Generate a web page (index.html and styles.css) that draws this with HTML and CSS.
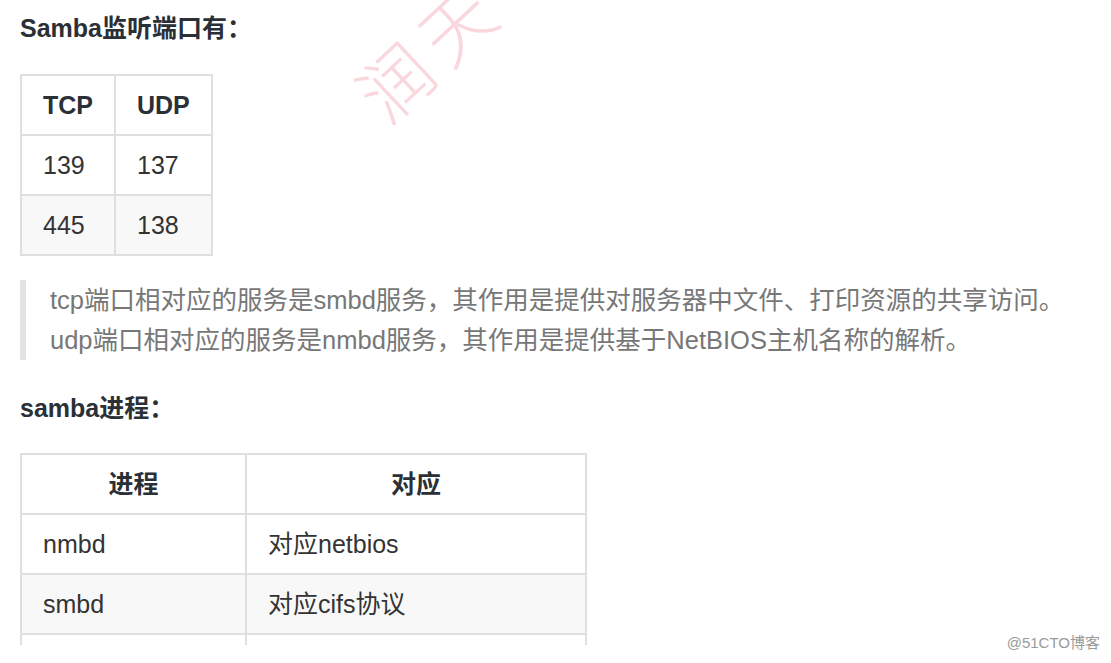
FILE: index.html
```html
<!DOCTYPE html>
<html lang="zh-CN">
<head>
    <meta charset="UTF-8">
    <meta name="viewport" content="width=device-width, initial-scale=1.0">
    <title>Samba 端口与进程</title>
    <link rel="stylesheet" href="styles.css">
</head>
<body>
    <div class="page">
        <h4 class="section-title">Samba监听端口有：</h4>

        <table class="md-table">
            <thead>
                <tr><th>TCP</th><th>UDP</th></tr>
            </thead>
            <tbody>
                <tr><td>139</td><td>137</td></tr>
                <tr><td>445</td><td>138</td></tr>
            </tbody>
        </table>

        <blockquote class="note">
            tcp端口相对应的服务是smbd服务，其作用是提供对服务器中文件、打印资源的共享访问。<br>
            udp端口相对应的服务是nmbd服务，其作用是提供基于NetBIOS主机名称的解析。
        </blockquote>

        <h4 class="section-title second">samba进程：</h4>

        <div class="table-crop">
            <table class="md-table wide">
                <thead>
                    <tr><th class="col-proc">进程</th><th class="col-desc">对应</th></tr>
                </thead>
                <tbody>
                    <tr><td>nmbd</td><td>对应netbios</td></tr>
                    <tr><td>smbd</td><td>对应cifs协议</td></tr>
                    <tr><td></td><td></td></tr>
                </tbody>
            </table>
        </div>

        <!-- watermarks sit over the content -->
        <div class="stamp">润天</div>
        <div class="credit">@51CTO博客</div>
    </div>
</body>
</html>
```

FILE: styles.css
```css
:root {
    --text-color: #333;
    --quote-color: #777;
    --border-color: #dfdfdf;
    --stripe-color: #f8f8f8;
}

body {
    margin: 0;
    background: #fff;
    font-family: "Liberation Sans", "Noto Sans CJK SC", sans-serif;
    color: var(--text-color);
}

.page {
    position: relative;
    height: 663px;
    overflow: hidden;
    padding: 8px 0 0 20px;
    box-sizing: border-box;
}

.section-title {
    margin: 0;
    font-size: 25px;
    line-height: 40px;
    font-weight: bold;
    color: #2b2f36;
}

.section-title.second {
    margin-top: 28px;
}

.md-table {
    border-collapse: collapse;
    margin-top: 26px;
    font-size: 25px;
    line-height: 40px;
}

.md-table th,
.md-table td {
    border: 2px solid var(--border-color);
    padding: 9px 21px;
    text-align: left;
}

.md-table th {
    font-weight: bold;
    color: #2b2f36;
}

.md-table tbody tr:nth-child(even) {
    background: var(--stripe-color);
}

.note {
    margin: 24px 0 0;
    padding: 0 0 0 24px;
    border-left: 6px solid #e2e2e2;
    font-size: 25.5px;
    line-height: 40px;
    color: var(--quote-color);
}

.table-crop {
    margin-top: 25px;
    height: 192px;
    overflow: hidden;
}

.md-table.wide {
    margin-top: 0;
    width: 567px;
    table-layout: fixed;
}

.md-table.wide th {
    text-align: center;
}

.md-table.wide td {
    height: 40px;
}

.col-proc {
    width: 181px;
}

.stamp {
    position: absolute;
    left: 357px;
    top: 44px;
    font-family: "Noto Sans CJK SC", sans-serif;
    font-size: 72px;
    line-height: 72px;
    font-weight: 300;
    letter-spacing: 12px;
    color: rgba(238, 110, 130, 0.28);
    transform: rotate(-43deg);
    transform-origin: 36px 36px;
    pointer-events: none;
}

.credit {
    position: absolute;
    right: 11px;
    bottom: 11px;
    font-size: 15px;
    color: #9a9a9a;
    text-shadow: 0 0 2px #fff;
}
```
